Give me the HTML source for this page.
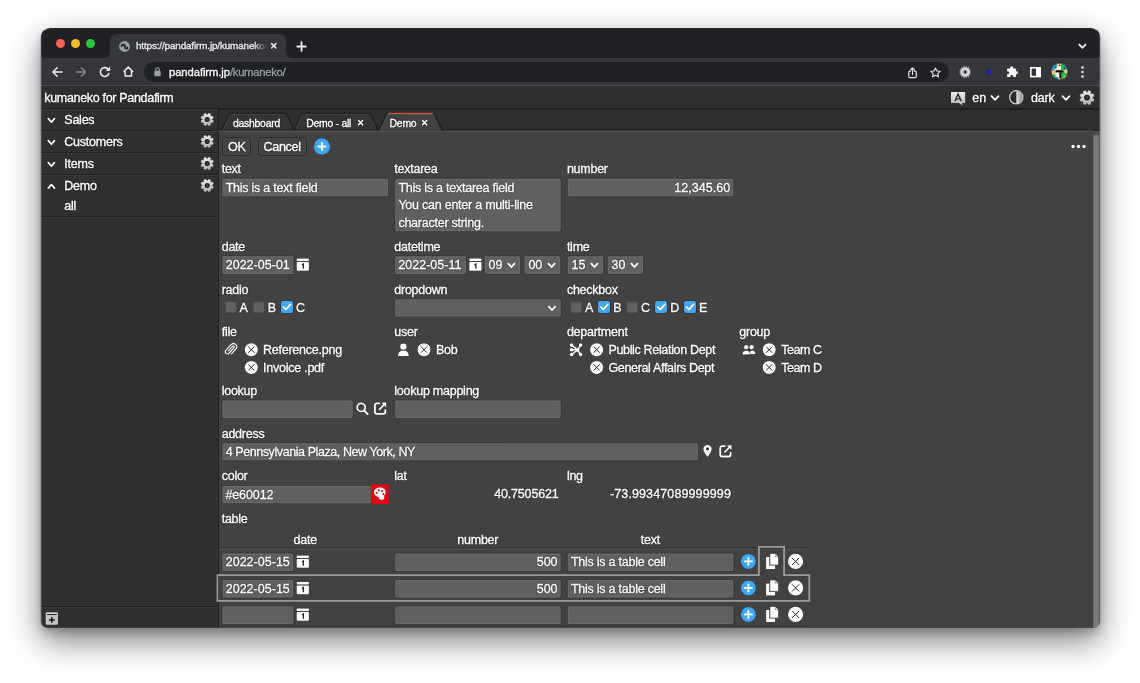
<!DOCTYPE html>
<html lang="en">
<head>
<meta charset="utf-8">
<title>kumaneko for Pandafirm</title>
<style>
*{box-sizing:border-box;margin:0;padding:0}
html,body{width:1140px;height:683px;background:#fff;overflow:hidden}
body{position:relative;font-family:"Liberation Sans",Arial,sans-serif;color:#fff;font-size:12.5px;letter-spacing:-0.25px}
.shadow{position:absolute;left:41px;top:28px;width:1059px;height:600px;border-radius:9px 9px 7px 7px;box-shadow:0 0 0 .6px rgba(0,0,0,.3),0 13px 32px rgba(0,0,0,.5),0 4px 9px rgba(0,0,0,.2)}
.win{position:absolute;left:41px;top:28px;width:1059px;height:600px;border-radius:9px 9px 7px 7px;overflow:hidden;background:#424242}
.rim{position:absolute;left:41px;top:28px;width:1059px;height:600px;border-radius:9px 9px 7px 7px;box-shadow:inset 0 0 0 1px rgba(255,255,255,.2),inset 0 1px 0 0 rgba(255,255,255,.5);pointer-events:none}
.in{position:absolute;left:-41px;top:-28px;width:1140px;height:683px;will-change:transform}
.a{position:absolute}
.t{position:absolute;white-space:pre;line-height:16px;height:16px;text-shadow:0 0 1.4px rgba(0,0,0,.85),0 0 1px rgba(0,0,0,.7);-webkit-text-stroke:.33px currentColor}
svg{position:absolute;overflow:visible}
svg.sh{filter:drop-shadow(0 0 .7px rgba(0,0,0,.95))}
.strip{left:41px;top:27px;width:1059px;height:31px;background:#202124}
.ctab{left:110px;top:34px;width:176px;height:24px;background:#35363a;border-radius:6px 6px 0 0}
.ear{width:6px;height:6px;top:52px;background:radial-gradient(circle at 0 0,rgba(53,54,58,0) 5.6px,#35363a 6.2px)}
.ear.r{background:radial-gradient(circle at 100% 0,rgba(53,54,58,0) 5.6px,#35363a 6.2px)}
.tool{left:41px;top:58px;width:1059px;height:28px;background:#35363a;border-bottom:1px solid #4a4b4f}
.pill{left:144.4px;top:61.6px;width:804.6px;height:20.4px;border-radius:10.2px;background:#202124}
.hdr{left:41px;top:86px;width:1059px;height:24px;background:#2e2e2e;border-bottom:2px solid #1e1e1e}
.side{left:41px;top:109px;width:177.6px;height:520px;background:#303030;border-right:1.2px solid #1f1f1f}
.tabs{left:218.6px;top:110px;width:882px;height:21px;background:#2f2f2f}
.inp{position:absolute;background:#616161;border:1px solid #545454;border-radius:1.5px;box-shadow:0 0 0 .5px rgba(60,60,60,.5)}
.btn{position:absolute;height:19px;border:1px solid #2a2a2a;border-radius:3.5px;background:#434343;text-align:center;line-height:18.4px;font-size:12.6px;letter-spacing:-.3px;box-shadow:inset 0 0 0 .6px rgba(255,255,255,.05);text-shadow:0 0 1.4px rgba(0,0,0,.85),0 0 1px rgba(0,0,0,.7);-webkit-text-stroke:.33px currentColor}
</style>
</head>
<body>
<svg width="0" height="0" style="left:0;top:0"><defs>
<linearGradient id="gg" x1="0" y1="0" x2="0" y2="1"><stop offset="0" stop-color="#ececec"/><stop offset="1" stop-color="#b4b4b4"/></linearGradient>
<linearGradient id="gh" x1="0" y1="0" x2="1" y2="0"><stop offset="0" stop-color="#e6e6e6"/><stop offset="1" stop-color="#8e8e8e"/></linearGradient>
</defs></svg>
<div class="shadow"></div>
<div class="win"><div class="in">
<div class="a strip"></div>
<div class="a ctab"></div>
<div class="a ear" style="left:104px"></div>
<div class="a ear r" style="left:286px"></div>
<div class="a tool"></div>
<div class="a pill"></div>
<div class="a hdr"></div>
<div class="a side"></div>
<div class="a tabs"></div>
<div class="a" style="left:56.099999999999994px;top:39.0px;width:9.4px;height:9.4px;border-radius:50%;background:#fe5f57;box-shadow:0 0 0 .5px rgba(0,0,0,.25)"></div>
<div class="a" style="left:70.8px;top:39.0px;width:9.4px;height:9.4px;border-radius:50%;background:#febc2e;box-shadow:0 0 0 .5px rgba(0,0,0,.25)"></div>
<div class="a" style="left:85.5px;top:39.0px;width:9.4px;height:9.4px;border-radius:50%;background:#28c840;box-shadow:0 0 0 .5px rgba(0,0,0,.25)"></div>
<svg style="left:118.6px;top:40.7px;" width="11" height="11" viewBox="0 0 11 11"><circle cx="5.5" cy="5.5" r="5.4" fill="#9aa0a6"/><path d="M2.6 5.2 Q3.2 2.8 5.2 3.9 Q6.4 4.8 6 5.8 Q5.6 7 7 7.6 Q8 7.8 8.4 6.6" fill="none" stroke="#2b2c30" stroke-width="2" stroke-linecap="round"/></svg>
<div class="t" style="left:136px;top:38px;font-size:9.85px;color:#e8eaed;letter-spacing:-0.12px;width:131px;overflow:hidden;-webkit-mask-image:linear-gradient(90deg,#000 118px,transparent 131px);mask-image:linear-gradient(90deg,#000 118px,transparent 131px);-webkit-text-stroke:.38px currentColor;">https://pandafirm.jp/kumaneko/</div>
<svg style="left:271.2px;top:43.2px;" width="5.6" height="5.6" viewBox="0 0 5.6 5.6"><path d="M.6 .6 L5 5 M5 .6 L.6 5" stroke="#e8eaed" stroke-width="1.5" stroke-linecap="round"/></svg>
<svg style="left:297px;top:41.5px;" width="9" height="9" viewBox="0 0 9 9"><path d="M4.5 .3 V8.7 M.3 4.5 H8.7" stroke="#e8eaed" stroke-width="1.9" stroke-linecap="round"/></svg>
<svg style="left:0;top:0" width="1140" height="683"><path d="M1079.30 44.55 L1082.40 47.85 L1085.50 44.55" fill="none" stroke="#e8eaed" stroke-width="1.8" stroke-linecap="round" stroke-linejoin="round"/></svg>
<svg style="left:52px;top:66.7px;" width="10.4" height="10" viewBox="0 0 10.4 10"><path d="M5.2 .7 L.9 5 L5.2 9.3 M1.1 5 H10" fill="none" stroke="#e8eaed" stroke-width="1.5" stroke-linecap="round" stroke-linejoin="round"/></svg>
<svg style="left:75.8px;top:66.7px;" width="10.4" height="10" viewBox="0 0 10.4 10"><path d="M5.2 .7 L9.5 5 L5.2 9.3 M9.3 5 H.4" fill="none" stroke="#85878b" stroke-width="1.4" stroke-linecap="round" stroke-linejoin="round"/></svg>
<svg style="left:99px;top:66.3px;" width="11.5" height="11.5" viewBox="0 0 11.5 11.5"><path d="M9.3 3.4 A4.4 4.4 0 1 0 9.9 7.5" fill="none" stroke="#e8eaed" stroke-width="1.6" stroke-linecap="round"/><path d="M11.2 .5 V5 H6.7 Z" fill="#e8eaed"/></svg>
<svg style="left:122.8px;top:66.3px;" width="10.6" height="11" viewBox="0 0 10.6 11"><path d="M.9 5.5 L5.3 1.1 L9.7 5.5 M2.1 4.9 V10 H8.5 V4.9" fill="none" stroke="#e8eaed" stroke-width="1.5" stroke-linejoin="round" stroke-linecap="round"/></svg>
<svg style="left:153.5px;top:67.2px;" width="7" height="9.4" viewBox="0 0 7 9.4"><rect x=".3" y="3.8" width="6.4" height="5.4" rx=".9" fill="#9aa0a6"/><path d="M1.7 4 V2.6 a1.8 1.8 0 0 1 3.6 0 V4" fill="none" stroke="#9aa0a6" stroke-width="1.1"/></svg>
<div class="t" style="left:169px;top:63.9px;font-size:11.25px;letter-spacing:-.08px;color:#fff">pandafirm.jp<span style="color:#9aa0a6;letter-spacing:-.28px">/kumaneko/</span></div>
<svg style="left:908px;top:66.6px;" width="9" height="11.4" viewBox="0 0 9 11.4"><path d="M2.6 4.2 H1.9 Q.7 4.2 .7 5.4 V9.5 Q.7 10.7 1.9 10.7 H7.1 Q8.3 10.7 8.3 9.5 V5.4 Q8.3 4.2 7.1 4.2 H6.4" fill="none" stroke="#dfe1e5" stroke-width="1.2" stroke-linecap="round"/><path d="M4.5 7.6 V1.2 M2.6 2.8 L4.5 .9 L6.4 2.8" fill="none" stroke="#dfe1e5" stroke-width="1.2" stroke-linecap="round" stroke-linejoin="round"/></svg>
<svg style="left:930.2px;top:66.6px;" width="11" height="10.6" viewBox="0 0 11 10.6"><path d="M5.5 1 L6.9 4 L10.2 4.35 L7.75 6.6 L8.45 9.85 L5.5 8.15 L2.55 9.85 L3.25 6.6 L.8 4.35 L4.1 4 Z" fill="none" stroke="#dfe1e5" stroke-width="1.2" stroke-linejoin="round"/></svg>
<svg style="left:0;top:0" width="1140" height="683"><path d="M969.75 71.30 L970.97 71.40 L970.97 72.60 L969.75 72.70 L969.60 73.34 L970.66 73.96 L970.14 75.04 L968.99 74.60 L968.58 75.12 L969.27 76.14 L968.33 76.88 L967.49 75.99 L966.90 76.28 L967.07 77.49 L965.90 77.76 L965.53 76.59 L964.87 76.59 L964.50 77.76 L963.33 77.49 L963.50 76.28 L962.91 75.99 L962.07 76.88 L961.13 76.14 L961.82 75.12 L961.41 74.60 L960.26 75.04 L959.74 73.96 L960.80 73.34 L960.65 72.70 L959.43 72.60 L959.43 71.40 L960.65 71.30 L960.80 70.66 L959.74 70.04 L960.26 68.96 L961.41 69.40 L961.82 68.88 L961.13 67.86 L962.07 67.12 L962.91 68.01 L963.50 67.72 L963.33 66.51 L964.50 66.24 L964.87 67.41 L965.53 67.41 L965.90 66.24 L967.07 66.51 L966.90 67.72 L967.49 68.01 L968.33 67.12 L969.27 67.86 L968.58 68.88 L968.99 69.40 L970.14 68.96 L970.66 70.04 L969.60 70.66Z" fill="#c9c9c9"/><circle cx="965.2" cy="72" r="3.4" fill="none" stroke="#eee" stroke-width=".8"/><circle cx="965.2" cy="72" r="1.7" fill="#3a3b3f"/></svg>
<svg style="left:986px;top:67.2px;" width="6" height="9.8" viewBox="0 0 6 9.8"><path d="M4 0 L.2 5.4 H2.7 L1.8 9.8 L5.8 4 H3.3 Z" fill="#1414f0"/></svg>
<svg style="left:1006.4px;top:66.4px;" width="11.8" height="11.4" viewBox="0 0 11.8 11.4"><path d="M4.1 1.9 a1.55 1.55 0 0 1 3.1 0 V2.6 H9.2 Q10 2.6 10 3.4 V5.3 H10.5 a1.45 1.45 0 0 1 0 2.9 H10 V10.3 Q10 11.1 9.2 11.1 H7.3 V10.5 a1.5 1.5 0 0 0 -3 0 V11.1 H1.9 Q1.1 11.1 1.1 10.3 V8.2 H1.6 a1.5 1.5 0 0 0 0 -3 H1.1 V3.4 Q1.1 2.6 1.9 2.6 H4.1 Z" fill="#fff"/></svg>
<svg style="left:1030px;top:66.8px;" width="11" height="10.4" viewBox="0 0 11 10.4"><rect x=".8" y=".8" width="9.4" height="8.8" fill="none" stroke="#fff" stroke-width="1.6"/><rect x="6" y=".8" width="4.2" height="8.8" fill="#fff"/></svg>
<svg style="left:1050.6px;top:63.2px;" width="17" height="17" viewBox="0 0 17 17"><defs><clipPath id="av"><circle cx="8.5" cy="8.5" r="8.4"/></clipPath></defs><g clip-path="url(#av)"><rect width="17" height="17" fill="#f3c485"/><path d="M0 0 H5.6 L6.4 3 L3.2 7.2 L0 8 Z" fill="#2ea3da"/><path d="M10.2 .2 H17 V17 H9.8 Z" fill="#1fb750"/><rect x="13.6" y="3" width="3.4" height="3.4" rx="1" fill="#2ea3da"/><rect x="13.2" y="6.8" width="4" height="3.2" rx="1" fill="#f3c485"/><path d="M12.6 13 L15.2 12.6 L15.6 17 H12 Z" fill="#f3c485"/><rect x="1.2" y="11.3" width="5.8" height="3.4" rx="1.2" fill="#1fb750"/><path d="M3.4 14.2 H7 V17 H4.4 Z" fill="#2b78b8"/><ellipse cx="7.8" cy="4.9" rx="2.5" ry="2.3" fill="#fbf8f2"/><circle cx="4.9" cy="4.2" r=".75" fill="#111"/><circle cx="8.8" cy="2.4" r=".75" fill="#111"/><circle cx="13.6" cy="5.3" r=".7" fill="#111"/><path d="M4.9 7.4 Q8 6.6 12.4 8 L12.2 9.6 Q8 9.2 4.9 9.7 Q4 8.5 4.9 7.4Z" fill="#121212"/><ellipse cx="6.5" cy="11.8" rx="2.3" ry="2.5" fill="#fbf8f2"/><path d="M8.2 9.6 H10.2 L10.4 15.6 H8.6 Z" fill="#121212"/></g><circle cx="8.5" cy="8.5" r="8.4" fill="none" stroke="#1d1d28" stroke-width=".7"/></svg>
<svg style="left:1081px;top:66px;" width="3" height="12" viewBox="0 0 3 12"><circle cx="1.5" cy="1.6" r="1.25" fill="#e8eaed"/><circle cx="1.5" cy="6" r="1.25" fill="#e8eaed"/><circle cx="1.5" cy="10.4" r="1.25" fill="#e8eaed"/></svg>
<div class="t" style="left:44.3px;top:90px;font-size:12.5px;letter-spacing:-0.32px;">kumaneko for Pandafirm</div>
<svg style="left:950.5px;top:91.9px;filter:drop-shadow(0 0 .5px rgba(0,0,0,.8));" width="14.2" height="14" viewBox="0 0 14.2 14"><path d="M.6 0 H13.6 Q14.2 0 14.2 .6 V10.4 Q14.2 11 13.6 11 H11.2 L11.6 13.8 L8 11 H.6 Q0 11 0 10.4 V.6 Q0 0 .6 0Z" fill="url(#gg)"/><path d="M3.9 9.3 L7.1 1.9 L10.3 9.3 M5.1 6.9 H9.1" fill="none" stroke="#2b2b2b" stroke-width="1.4"/></svg>
<div class="t" style="left:972.3px;top:90px;font-size:12.5px;letter-spacing:-0.1px;">en</div>
<svg style="left:0;top:0" width="1140" height="683"><path d="M991.50 96.15 L995.00 99.85 L998.50 96.15" fill="none" stroke="#fff" stroke-width="1.7" stroke-linecap="round" stroke-linejoin="round"/></svg>
<svg style="left:1009.2px;top:90.3px;" width="14.6" height="14.6" viewBox="0 0 14.6 14.6"><circle cx="7.3" cy="7.3" r="6.6" fill="#2b2b2b" stroke="#d6d6d6" stroke-width="1.2"/><path d="M7.3 1.2 A6.1 6.1 0 0 1 7.3 13.4 Z" fill="url(#gh)"/></svg>
<div class="t" style="left:1031px;top:90px;font-size:12.5px;letter-spacing:-0.2px;">dark</div>
<svg style="left:0;top:0" width="1140" height="683"><path d="M1062.50 96.15 L1066.00 99.85 L1069.50 96.15" fill="none" stroke="#fff" stroke-width="1.7" stroke-linecap="round" stroke-linejoin="round"/></svg>
<svg style="left:0;top:0;filter:drop-shadow(0 0 .6px rgba(0,0,0,.9))" width="1140" height="683"><path d="M1087.00 92.64 L1088.65 90.49 L1090.86 91.41 L1090.51 94.09 L1093.19 93.74 L1094.11 95.95 L1091.96 97.60 L1094.11 99.25 L1093.19 101.46 L1090.51 101.11 L1090.86 103.79 L1088.65 104.71 L1087.00 102.56 L1085.35 104.71 L1083.14 103.79 L1083.49 101.11 L1080.81 101.46 L1079.89 99.25 L1082.04 97.60 L1079.89 95.95 L1080.81 93.74 L1083.49 94.09 L1083.14 91.41 L1085.35 90.49Z" fill="url(#gg)" stroke="#cdcdcd" stroke-width=".5" stroke-linejoin="round"/><circle cx="1087" cy="97.6" r="2.9" fill="#191919"/><circle cx="1087" cy="97.6" r="1.74" fill="#3d3d3d"/></svg>
<div class="a" style="left:41px;top:109px;width:176.4px;height:22px;background:#303030;border-top:1.4px solid #3b3b3b;border-bottom:1.3px solid #212121"></div>
<svg style="left:0;top:0" width="1140" height="683"><path d="M48.25 118.50 L51.40 122.10 L54.55 118.50" fill="none" stroke="#fff" stroke-width="1.65" stroke-linecap="round" stroke-linejoin="round"/></svg>
<div class="t" style="left:64.3px;top:112px;font-size:12.5px;letter-spacing:-0.24px;">Sales</div>
<svg style="left:0;top:0;filter:drop-shadow(0 0 .6px rgba(0,0,0,.9))" width="1140" height="683"><path d="M207.20 115.05 L208.65 113.17 L210.59 113.97 L210.28 116.32 L212.63 116.01 L213.43 117.95 L211.55 119.40 L213.43 120.85 L212.63 122.79 L210.28 122.48 L210.59 124.83 L208.65 125.63 L207.20 123.75 L205.75 125.63 L203.81 124.83 L204.12 122.48 L201.77 122.79 L200.97 120.85 L202.85 119.40 L200.97 117.95 L201.77 116.01 L204.12 116.32 L203.81 113.97 L205.75 113.17Z" fill="url(#gg)" stroke="#cdcdcd" stroke-width=".5" stroke-linejoin="round"/><circle cx="207.2" cy="119.4" r="2.5" fill="#191919"/><circle cx="207.2" cy="119.4" r="1.50" fill="#3d3d3d"/></svg>
<div class="a" style="left:41px;top:131px;width:176.4px;height:22px;background:#303030;border-top:1.4px solid #3b3b3b;border-bottom:1.3px solid #212121"></div>
<svg style="left:0;top:0" width="1140" height="683"><path d="M48.25 140.50 L51.40 144.10 L54.55 140.50" fill="none" stroke="#fff" stroke-width="1.65" stroke-linecap="round" stroke-linejoin="round"/></svg>
<div class="t" style="left:64.3px;top:134px;font-size:12.5px;letter-spacing:-0.24px;">Customers</div>
<svg style="left:0;top:0;filter:drop-shadow(0 0 .6px rgba(0,0,0,.9))" width="1140" height="683"><path d="M207.20 137.05 L208.65 135.17 L210.59 135.97 L210.28 138.32 L212.63 138.01 L213.43 139.95 L211.55 141.40 L213.43 142.85 L212.63 144.79 L210.28 144.48 L210.59 146.83 L208.65 147.63 L207.20 145.75 L205.75 147.63 L203.81 146.83 L204.12 144.48 L201.77 144.79 L200.97 142.85 L202.85 141.40 L200.97 139.95 L201.77 138.01 L204.12 138.32 L203.81 135.97 L205.75 135.17Z" fill="url(#gg)" stroke="#cdcdcd" stroke-width=".5" stroke-linejoin="round"/><circle cx="207.2" cy="141.4" r="2.5" fill="#191919"/><circle cx="207.2" cy="141.4" r="1.50" fill="#3d3d3d"/></svg>
<div class="a" style="left:41px;top:153px;width:176.4px;height:22px;background:#303030;border-top:1.4px solid #3b3b3b;border-bottom:1.3px solid #212121"></div>
<svg style="left:0;top:0" width="1140" height="683"><path d="M48.25 162.50 L51.40 166.10 L54.55 162.50" fill="none" stroke="#fff" stroke-width="1.65" stroke-linecap="round" stroke-linejoin="round"/></svg>
<div class="t" style="left:64.3px;top:156px;font-size:12.5px;letter-spacing:-0.24px;">Items</div>
<svg style="left:0;top:0;filter:drop-shadow(0 0 .6px rgba(0,0,0,.9))" width="1140" height="683"><path d="M207.20 159.05 L208.65 157.17 L210.59 157.97 L210.28 160.32 L212.63 160.01 L213.43 161.95 L211.55 163.40 L213.43 164.85 L212.63 166.79 L210.28 166.48 L210.59 168.83 L208.65 169.63 L207.20 167.75 L205.75 169.63 L203.81 168.83 L204.12 166.48 L201.77 166.79 L200.97 164.85 L202.85 163.40 L200.97 161.95 L201.77 160.01 L204.12 160.32 L203.81 157.97 L205.75 157.17Z" fill="url(#gg)" stroke="#cdcdcd" stroke-width=".5" stroke-linejoin="round"/><circle cx="207.2" cy="163.4" r="2.5" fill="#191919"/><circle cx="207.2" cy="163.4" r="1.50" fill="#3d3d3d"/></svg>
<div class="a" style="left:41px;top:175px;width:176.4px;height:22px;background:#303030;border-top:1.4px solid #3b3b3b"></div>
<svg style="left:0;top:0" width="1140" height="683"><path d="M48.25 188.10 L51.40 184.50 L54.55 188.10" fill="none" stroke="#fff" stroke-width="1.65" stroke-linecap="round" stroke-linejoin="round"/></svg>
<div class="t" style="left:64.3px;top:178px;font-size:12.5px;letter-spacing:-0.24px;">Demo</div>
<svg style="left:0;top:0;filter:drop-shadow(0 0 .6px rgba(0,0,0,.9))" width="1140" height="683"><path d="M207.20 181.05 L208.65 179.17 L210.59 179.97 L210.28 182.32 L212.63 182.01 L213.43 183.95 L211.55 185.40 L213.43 186.85 L212.63 188.79 L210.28 188.48 L210.59 190.83 L208.65 191.63 L207.20 189.75 L205.75 191.63 L203.81 190.83 L204.12 188.48 L201.77 188.79 L200.97 186.85 L202.85 185.40 L200.97 183.95 L201.77 182.01 L204.12 182.32 L203.81 179.97 L205.75 179.17Z" fill="url(#gg)" stroke="#cdcdcd" stroke-width=".5" stroke-linejoin="round"/><circle cx="207.2" cy="185.4" r="2.5" fill="#191919"/><circle cx="207.2" cy="185.4" r="1.50" fill="#3d3d3d"/></svg>
<div class="t" style="left:64.3px;top:198px;font-size:12.5px;letter-spacing:-0.24px;">all</div>
<div class="a" style="left:41px;top:215.8px;width:176.4px;height:1.3px;background:#212121"></div>
<div class="a" style="left:41px;top:217.1px;width:176.4px;height:1.2px;background:#383838"></div>
<div class="a" style="left:41px;top:606px;width:176.4px;height:1.2px;background:#1f1f1f"></div>
<div class="a" style="left:41px;top:607.2px;width:176.4px;height:1.2px;background:#3a3a3a"></div>
<svg class="sh" style="left:0;top:0" width="1140" height="683"><rect x="45.7" y="612.3" width="12.2" height="12.4" rx="1.2" fill="#d4d4d4"/><rect x="46.9" y="614.1" width="9.8" height="1" fill="#1a1a1a"/><rect x="46.6" y="615.9" width="10.4" height="7.8" fill="#c4c4c4"/><path d="M51.8 617 V622.8 M48.9 619.9 H54.7" stroke="#111" stroke-width="1.5"/></svg>
<!--TABS-->
<svg style="left:0;top:0" width="1140" height="683"><path d="M221.4 130.6 L228.80 114.80 Q230.00 113.2 231.80 113.2 H284.00 Q285.80 113.2 287.00 114.80 L294.4 130.6 Z" fill="#353535"/><path d="M221.4 130.6 L228.80 114.80 Q230.00 113.2 231.80 113.2 H284.00 Q285.80 113.2 287.00 114.80 L294.4 130.6" fill="none" stroke="#1e1e1e" stroke-width="1.3"/><path d="M223.0 130.6 L230.00 115.10 Q230.60 114.30 232.00 114.30 H283.80" fill="none" stroke="rgba(255,255,255,.07)" stroke-width="1"/></svg>
<div class="t" style="left:233px;top:116px;font-size:10.4px;letter-spacing:-0.24px;">dashboard</div>
<svg style="left:0;top:0" width="1140" height="683"><path d="M293.6 130.6 L301.00 114.80 Q302.20 113.2 304.00 113.2 H368.20 Q370.00 113.2 371.20 114.80 L378.6 130.6 Z" fill="#353535"/><path d="M293.6 130.6 L301.00 114.80 Q302.20 113.2 304.00 113.2 H368.20 Q370.00 113.2 371.20 114.80 L378.6 130.6" fill="none" stroke="#1e1e1e" stroke-width="1.3"/><path d="M295.20000000000005 130.6 L302.20 115.10 Q302.80 114.30 304.20 114.30 H368.00" fill="none" stroke="rgba(255,255,255,.07)" stroke-width="1"/></svg>
<div class="t" style="left:306.2px;top:116px;font-size:10.4px;letter-spacing:-0.24px;">Demo - all</div>
<svg style="left:0;top:0" width="1140" height="683"><rect x="218.6" y="129.2" width="882" height="1.5" fill="#242424"/><rect x="218.6" y="130.6" width="875" height="1.1" fill="#565656"/></svg>
<svg style="left:0;top:0" width="1140" height="683"><path d="M378.6 130.6 L386.00 114.80 Q387.20 113.2 389.00 113.2 H432.00 Q433.80 113.2 435.00 114.80 L442.4 130.6 Z" fill="#424242"/><path d="M378.6 130.6 L386.00 114.80 Q387.20 113.2 389.00 113.2 H432.00 Q433.80 113.2 435.00 114.80 L442.4 130.6" fill="none" stroke="#1e1e1e" stroke-width="1.3"/><path d="M380.20000000000005 130.6 L387.20 115.10 Q387.80 114.30 389.20 114.30 H431.80" fill="none" stroke="rgba(255,255,255,.07)" stroke-width="1"/><path d="M388.20 113.30 H432.80" stroke="#c65a32" stroke-width="1.3"/></svg>
<div class="t" style="left:389.6px;top:116px;font-size:10.4px;letter-spacing:-0.24px;">Demo</div>
<svg style="left:358.0px;top:120.4px;" width="5.2" height="5.2" viewBox="0 0 5.2 5.2"><path d="M.5 .5 L4.7 4.7 M4.7 .5 L.5 4.7" stroke="#fff" stroke-width="1.35" stroke-linecap="round"/></svg>
<svg style="left:422.2px;top:120.4px;" width="5.2" height="5.2" viewBox="0 0 5.2 5.2"><path d="M.5 .5 L4.7 4.7 M4.7 .5 L.5 4.7" stroke="#fff" stroke-width="1.35" stroke-linecap="round"/></svg>
<div class="btn" style="left:222.2px;top:136.6px;width:29.3px">OK</div>
<div class="btn" style="left:257.5px;top:136.6px;width:49.2px">Cancel</div>
<svg class="sh" style="left:0;top:0" width="1140" height="683"><circle cx="322" cy="146.5" r="8.2" fill="#3fa7f5"/><path d="M318.4 146.5 H325.6 M322 142.9 V150.1" stroke="#fff" stroke-width="1.8" stroke-linecap="round"/></svg>
<svg class="sh" style="left:0;top:0" width="1140" height="683"><circle cx="1073" cy="146.4" r="1.75" fill="#fff"/><circle cx="1078.5" cy="146.4" r="1.75" fill="#fff"/><circle cx="1084" cy="146.4" r="1.75" fill="#fff"/></svg>
<div class="a" style="left:1093px;top:131px;width:7px;height:498px;background:#4a4a4a"></div>
<svg style="left:0;top:0" width="1140" height="683"><rect x="1093.3" y="135" width="5.6" height="500" rx="2.8" fill="#7a7a7a"/></svg>
<div class="t" style="left:221.7px;top:161px;font-size:12.5px;">text</div>
<div class="t" style="left:394.3px;top:161px;font-size:12.5px;">textarea</div>
<div class="t" style="left:566.9px;top:161px;font-size:12.5px;">number</div>
<svg style="left:0;top:0" width="1140" height="683"><rect x="221.60" y="177.75" width="167.50" height="19.40" rx="1.8" fill="#3a3a3a"/><rect x="222.60" y="178.75" width="165.50" height="17.40" rx="1.1" fill="#6b6b6b"/><rect x="223.60" y="179.75" width="163.50" height="15.40" rx=".5" fill="#606060"/></svg>
<div class="t" style="left:225.7px;top:180px;font-size:12.5px;letter-spacing:-0.24px;">This is a text field</div>
<svg style="left:0;top:0" width="1140" height="683"><rect x="394.20" y="177.75" width="167.50" height="54.40" rx="1.8" fill="#3a3a3a"/><rect x="395.20" y="178.75" width="165.50" height="52.40" rx="1.1" fill="#6b6b6b"/><rect x="396.20" y="179.75" width="163.50" height="50.40" rx=".5" fill="#606060"/></svg>
<div class="t" style="left:398.40000000000003px;top:180px;font-size:12.5px;letter-spacing:-0.24px;">This is a textarea field</div>
<div class="t" style="left:398.40000000000003px;top:197px;font-size:12.5px;letter-spacing:-0.24px;">You can enter a multi-line</div>
<div class="t" style="left:398.40000000000003px;top:215px;font-size:12.5px;letter-spacing:-0.24px;">character string.</div>
<svg style="left:0;top:0" width="1140" height="683"><rect x="566.80" y="177.75" width="167.50" height="19.40" rx="1.8" fill="#3a3a3a"/><rect x="567.80" y="178.75" width="165.50" height="17.40" rx="1.1" fill="#6b6b6b"/><rect x="568.80" y="179.75" width="163.50" height="15.40" rx=".5" fill="#606060"/></svg>
<div class="t" style="left:567.4px;top:180px;font-size:12.5px;letter-spacing:0.05px;width:162.8px;text-align:right;">12,345.60</div>
<div class="t" style="left:221.7px;top:239px;font-size:12.5px;">date</div>
<div class="t" style="left:394.3px;top:239px;font-size:12.5px;">datetime</div>
<div class="t" style="left:566.9px;top:239px;font-size:12.5px;">time</div>
<svg style="left:0;top:0" width="1140" height="683"><rect x="221.60" y="255.35" width="72.70" height="19.60" rx="1.8" fill="#3a3a3a"/><rect x="222.60" y="256.35" width="70.70" height="17.60" rx="1.1" fill="#6b6b6b"/><rect x="223.60" y="257.35" width="68.70" height="15.60" rx=".5" fill="#606060"/></svg>
<div class="t" style="left:225.7px;top:257px;font-size:12.5px;letter-spacing:0.02px;">2022-05-01</div>
<svg class="sh" style="left:0;top:0" width="1140" height="683"><rect x="296.7" y="258.4" width="12.2" height="2.5" rx=".6" fill="#fff"/><rect x="296.7" y="261.9" width="12.2" height="8.8" rx=".8" fill="#fff"/><path d="M301.9 265.0 L303.3 264.0 V268.79999999999995" fill="none" stroke="#222" stroke-width="1.3"/></svg>
<svg style="left:0;top:0" width="1140" height="683"><rect x="394.20" y="255.35" width="72.70" height="19.60" rx="1.8" fill="#3a3a3a"/><rect x="395.20" y="256.35" width="70.70" height="17.60" rx="1.1" fill="#6b6b6b"/><rect x="396.20" y="257.35" width="68.70" height="15.60" rx=".5" fill="#606060"/></svg>
<div class="t" style="left:398.3px;top:257px;font-size:12.5px;letter-spacing:0.02px;">2022-05-11</div>
<svg class="sh" style="left:0;top:0" width="1140" height="683"><rect x="469.3" y="258.4" width="12.2" height="2.5" rx=".6" fill="#fff"/><rect x="469.3" y="261.9" width="12.2" height="8.8" rx=".8" fill="#fff"/><path d="M474.5 265.0 L475.90000000000003 264.0 V268.79999999999995" fill="none" stroke="#222" stroke-width="1.3"/></svg>
<svg style="left:0;top:0" width="1140" height="683"><rect x="483.80" y="255.35" width="37.30" height="19.40" rx="1.8" fill="#3a3a3a"/><rect x="484.80" y="256.35" width="35.30" height="17.40" rx="1.1" fill="#6b6b6b"/><rect x="485.80" y="257.35" width="33.30" height="15.40" rx=".5" fill="#606060"/></svg>
<div class="t" style="left:488.59999999999997px;top:257px;font-size:12.5px;letter-spacing:0.02px;">09</div>
<svg style="left:0;top:0" width="1140" height="683"><path d="M508.30 263.60 L511.40 267.00 L514.50 263.60" fill="none" stroke="#fff" stroke-width="1.75" stroke-linecap="round" stroke-linejoin="round"/></svg>
<svg style="left:0;top:0" width="1140" height="683"><rect x="523.60" y="255.35" width="37.70" height="19.40" rx="1.8" fill="#3a3a3a"/><rect x="524.60" y="256.35" width="35.70" height="17.40" rx="1.1" fill="#6b6b6b"/><rect x="525.60" y="257.35" width="33.70" height="15.40" rx=".5" fill="#606060"/></svg>
<div class="t" style="left:528.4000000000001px;top:257px;font-size:12.5px;letter-spacing:0.02px;">00</div>
<svg style="left:0;top:0" width="1140" height="683"><path d="M548.50 263.60 L551.60 267.00 L554.70 263.60" fill="none" stroke="#fff" stroke-width="1.75" stroke-linecap="round" stroke-linejoin="round"/></svg>
<svg style="left:0;top:0" width="1140" height="683"><rect x="566.80" y="255.35" width="37.30" height="19.40" rx="1.8" fill="#3a3a3a"/><rect x="567.80" y="256.35" width="35.30" height="17.40" rx="1.1" fill="#6b6b6b"/><rect x="568.80" y="257.35" width="33.30" height="15.40" rx=".5" fill="#606060"/></svg>
<div class="t" style="left:571.6px;top:257px;font-size:12.5px;letter-spacing:0.02px;">15</div>
<svg style="left:0;top:0" width="1140" height="683"><path d="M591.30 263.60 L594.40 267.00 L597.50 263.60" fill="none" stroke="#fff" stroke-width="1.75" stroke-linecap="round" stroke-linejoin="round"/></svg>
<svg style="left:0;top:0" width="1140" height="683"><rect x="606.80" y="255.35" width="37.30" height="19.40" rx="1.8" fill="#3a3a3a"/><rect x="607.80" y="256.35" width="35.30" height="17.40" rx="1.1" fill="#6b6b6b"/><rect x="608.80" y="257.35" width="33.30" height="15.40" rx=".5" fill="#606060"/></svg>
<div class="t" style="left:611.6px;top:257px;font-size:12.5px;letter-spacing:0.02px;">30</div>
<svg style="left:0;top:0" width="1140" height="683"><path d="M631.30 263.60 L634.40 267.00 L637.50 263.60" fill="none" stroke="#fff" stroke-width="1.75" stroke-linecap="round" stroke-linejoin="round"/></svg>
<div class="t" style="left:221.7px;top:282px;font-size:12.5px;">radio</div>
<div class="t" style="left:394.3px;top:282px;font-size:12.5px;">dropdown</div>
<div class="t" style="left:566.9px;top:282px;font-size:12.5px;">checkbox</div>
<svg style="left:0;top:0" width="1140" height="683"><rect x="225.1" y="301.40000000000003" width="11.6" height="11.6" rx="1.6" fill="#4c4c4c"/><rect x="225.9" y="302.2" width="10" height="10" rx="1" fill="#616161"/></svg>
<div class="t" style="left:239.6px;top:300px;font-size:12.5px;">A</div>
<svg style="left:0;top:0" width="1140" height="683"><rect x="253.1" y="301.40000000000003" width="11.6" height="11.6" rx="1.6" fill="#4c4c4c"/><rect x="253.9" y="302.2" width="10" height="10" rx="1" fill="#616161"/></svg>
<div class="t" style="left:267.8px;top:300px;font-size:12.5px;">B</div>
<div class="a" style="left:280.9px;top:300.8px;width:12px;height:12px;background:#42a5f5;border-radius:2px;box-shadow:0 0 0 .5px rgba(0,0,0,.35)"></div>
<svg style="left:0;top:0" width="1140" height="683"><path d="M283.5 307.0 L285.9 309.5 L290.5 304.40000000000003" fill="none" stroke="#fff" stroke-width="1.7" stroke-linecap="round" stroke-linejoin="round"/></svg>
<div class="t" style="left:296px;top:300px;font-size:12.5px;">C</div>
<svg style="left:0;top:0" width="1140" height="683"><rect x="394.20" y="298.35" width="167.50" height="19.20" rx="1.8" fill="#3a3a3a"/><rect x="395.20" y="299.35" width="165.50" height="17.20" rx="1.1" fill="#6b6b6b"/><rect x="396.20" y="300.35" width="163.50" height="15.20" rx=".5" fill="#606060"/></svg>
<svg style="left:0;top:0" width="1140" height="683"><path d="M548.90 306.60 L552.00 310.00 L555.10 306.60" fill="none" stroke="#fff" stroke-width="1.75" stroke-linecap="round" stroke-linejoin="round"/></svg>
<svg style="left:0;top:0" width="1140" height="683"><rect x="570.5" y="301.40000000000003" width="11.6" height="11.6" rx="1.6" fill="#4c4c4c"/><rect x="571.3" y="302.2" width="10" height="10" rx="1" fill="#616161"/></svg>
<div class="t" style="left:585px;top:300px;font-size:12.5px;">A</div>
<div class="a" style="left:598.3px;top:300.8px;width:12px;height:12px;background:#42a5f5;border-radius:2px;box-shadow:0 0 0 .5px rgba(0,0,0,.35)"></div>
<svg style="left:0;top:0" width="1140" height="683"><path d="M600.9 307.0 L603.3 309.5 L607.9 304.40000000000003" fill="none" stroke="#fff" stroke-width="1.7" stroke-linecap="round" stroke-linejoin="round"/></svg>
<div class="t" style="left:613.2px;top:300px;font-size:12.5px;">B</div>
<svg style="left:0;top:0" width="1140" height="683"><rect x="626.5" y="301.40000000000003" width="11.6" height="11.6" rx="1.6" fill="#4c4c4c"/><rect x="627.3" y="302.2" width="10" height="10" rx="1" fill="#616161"/></svg>
<div class="t" style="left:641px;top:300px;font-size:12.5px;">C</div>
<div class="a" style="left:655.3px;top:300.8px;width:12px;height:12px;background:#42a5f5;border-radius:2px;box-shadow:0 0 0 .5px rgba(0,0,0,.35)"></div>
<svg style="left:0;top:0" width="1140" height="683"><path d="M657.9 307.0 L660.3 309.5 L664.9 304.40000000000003" fill="none" stroke="#fff" stroke-width="1.7" stroke-linecap="round" stroke-linejoin="round"/></svg>
<div class="t" style="left:670.2px;top:300px;font-size:12.5px;">D</div>
<div class="a" style="left:683.9px;top:300.8px;width:12px;height:12px;background:#42a5f5;border-radius:2px;box-shadow:0 0 0 .5px rgba(0,0,0,.35)"></div>
<svg style="left:0;top:0" width="1140" height="683"><path d="M686.5 307.0 L688.9 309.5 L693.5 304.40000000000003" fill="none" stroke="#fff" stroke-width="1.7" stroke-linecap="round" stroke-linejoin="round"/></svg>
<div class="t" style="left:699px;top:300px;font-size:12.5px;">E</div>
<div class="t" style="left:221.7px;top:324px;font-size:12.5px;">file</div>
<div class="t" style="left:394.3px;top:324px;font-size:12.5px;">user</div>
<div class="t" style="left:566.9px;top:324px;font-size:12.5px;">department</div>
<div class="t" style="left:739.3px;top:324px;font-size:12.5px;">group</div>
<svg class="sh" style="left:0;top:0" width="1140" height="683"><g transform="translate(231 349.5) rotate(42) scale(.93)"><path d="M-1.1 2.6 V-3.6 a1.1 1.1 0 0 1 2.2 0 V4.4 a2.3 2.3 0 0 1 -4.6 0 V-3.9 a3.5 3.5 0 0 1 7 0 V3.2" fill="none" stroke="#fff" stroke-width="1.3" stroke-linecap="round"/></g></svg>
<svg class="sh" style="left:0;top:0" width="1140" height="683"><circle cx="251.3" cy="349.7" r="6.5" fill="#fff"/><path d="M248.50500000000002 346.905 L254.095 352.495 M254.095 346.905 L248.50500000000002 352.495" stroke="#1c1c1c" stroke-width=".95" stroke-linecap="round"/></svg>
<div class="t" style="left:263px;top:342px;font-size:12.5px;letter-spacing:-0.24px;">Reference.png</div>
<svg class="sh" style="left:0;top:0" width="1140" height="683"><circle cx="251.3" cy="367.4" r="6.5" fill="#fff"/><path d="M248.50500000000002 364.60499999999996 L254.095 370.195 M254.095 364.60499999999996 L248.50500000000002 370.195" stroke="#1c1c1c" stroke-width=".95" stroke-linecap="round"/></svg>
<div class="t" style="left:263px;top:360px;font-size:12.5px;letter-spacing:-0.24px;">Invoice .pdf</div>
<svg class="sh" style="left:0;top:0" width="1140" height="683"><circle cx="403.4" cy="346.6" r="3.2" fill="#fff"/><path d="M398 356 q0 -5.6 5.4 -5.6 q5.4 0 5.4 5.6 z" fill="#fff"/></svg>
<svg class="sh" style="left:0;top:0" width="1140" height="683"><circle cx="424" cy="349.7" r="6.5" fill="#fff"/><path d="M421.205 346.905 L426.795 352.495 M426.795 346.905 L421.205 352.495" stroke="#1c1c1c" stroke-width=".95" stroke-linecap="round"/></svg>
<div class="t" style="left:436px;top:342px;font-size:12.5px;letter-spacing:-0.24px;">Bob</div>
<svg class="sh" style="left:0;top:0" width="1140" height="683"><path d="M577.6 349.8 L571.6 345.1" stroke="#fff" stroke-width="1.5"/><path d="M577.6 349.8 L580.6 345.1" stroke="#fff" stroke-width="1.5"/><path d="M577.6 349.8 L571.6 349.8" stroke="#fff" stroke-width="1.5"/><path d="M577.6 349.8 L571.6 354.5" stroke="#fff" stroke-width="1.5"/><path d="M577.6 349.8 L580.6 354.5" stroke="#fff" stroke-width="1.5"/><circle cx="571.6" cy="345.1" r="1.8" fill="#fff"/><circle cx="580.6" cy="345.1" r="1.8" fill="#fff"/><circle cx="571.6" cy="349.8" r="1.8" fill="#fff"/><circle cx="571.6" cy="354.5" r="1.8" fill="#fff"/><circle cx="580.6" cy="354.5" r="1.8" fill="#fff"/><circle cx="577.6" cy="349.8" r="1.9" fill="#fff"/></svg>
<svg class="sh" style="left:0;top:0" width="1140" height="683"><circle cx="596.6" cy="349.7" r="6.5" fill="#fff"/><path d="M593.8050000000001 346.905 L599.395 352.495 M599.395 346.905 L593.8050000000001 352.495" stroke="#1c1c1c" stroke-width=".95" stroke-linecap="round"/></svg>
<div class="t" style="left:608.4px;top:342px;font-size:12.5px;letter-spacing:-0.33px;">Public Relation Dept</div>
<svg class="sh" style="left:0;top:0" width="1140" height="683"><circle cx="596.6" cy="367.4" r="6.5" fill="#fff"/><path d="M593.8050000000001 364.60499999999996 L599.395 370.195 M599.395 364.60499999999996 L593.8050000000001 370.195" stroke="#1c1c1c" stroke-width=".95" stroke-linecap="round"/></svg>
<div class="t" style="left:608.4px;top:360px;font-size:12.5px;letter-spacing:-0.33px;">General Affairs Dept</div>
<svg class="sh" style="left:0;top:0" width="1140" height="683"><circle cx="751.6" cy="347.2" r="2.1" fill="#fff"/><path d="M749.6 354 q.2 -3.6 2.6 -3.6 q3 0 3.2 3.6 z" fill="#fff"/><circle cx="746.2" cy="347.2" r="2.4" fill="#fff" stroke="#424242" stroke-width=".5"/><path d="M742.2 354.8 q0 -4.4 4 -4.4 q4 0 4 4.4 z" fill="#fff" stroke="#424242" stroke-width=".5"/></svg>
<svg class="sh" style="left:0;top:0" width="1140" height="683"><circle cx="769.2" cy="349.7" r="6.5" fill="#fff"/><path d="M766.4050000000001 346.905 L771.995 352.495 M771.995 346.905 L766.4050000000001 352.495" stroke="#1c1c1c" stroke-width=".95" stroke-linecap="round"/></svg>
<div class="t" style="left:781.2px;top:342px;font-size:12.5px;letter-spacing:-0.45px;">Team C</div>
<svg class="sh" style="left:0;top:0" width="1140" height="683"><circle cx="769.2" cy="367.4" r="6.5" fill="#fff"/><path d="M766.4050000000001 364.60499999999996 L771.995 370.195 M771.995 364.60499999999996 L766.4050000000001 370.195" stroke="#1c1c1c" stroke-width=".95" stroke-linecap="round"/></svg>
<div class="t" style="left:781.2px;top:360px;font-size:12.5px;letter-spacing:-0.45px;">Team D</div>
<div class="t" style="left:221.7px;top:383px;font-size:12.5px;">lookup</div>
<div class="t" style="left:394.3px;top:383px;font-size:12.5px;">lookup mapping</div>
<svg style="left:0;top:0" width="1140" height="683"><rect x="221.60" y="399.55" width="132.10" height="19.40" rx="1.8" fill="#3a3a3a"/><rect x="222.60" y="400.55" width="130.10" height="17.40" rx="1.1" fill="#6b6b6b"/><rect x="223.60" y="401.55" width="128.10" height="15.40" rx=".5" fill="#606060"/></svg>
<svg class="sh" style="left:0;top:0" width="1140" height="683"><circle cx="361.2" cy="407.4" r="4" fill="none" stroke="#fff" stroke-width="1.8"/><path d="M364.2 410.6 L367.6 414" stroke="#fff" stroke-width="1.9" stroke-linecap="round"/></svg>
<svg class="sh" style="left:0;top:0" width="1140" height="683"><path d="M380.10 403.40 H376.90 Q374.90 403.40 374.90 405.40 V411.80 Q374.90 413.80 376.90 413.80 H383.30 Q385.30 413.80 385.30 411.80 V409.21" fill="none" stroke="#fff" stroke-width="1.8" stroke-linecap="butt"/><path d="M379.12 409.82 L385.00 403.70" stroke="#fff" stroke-width="1.7"/><path d="M381.56 402.60 H386.20 V407.38 Z" fill="#fff"/></svg>
<svg style="left:0;top:0" width="1140" height="683"><rect x="394.20" y="399.55" width="167.50" height="19.40" rx="1.8" fill="#3a3a3a"/><rect x="395.20" y="400.55" width="165.50" height="17.40" rx="1.1" fill="#6b6b6b"/><rect x="396.20" y="401.55" width="163.50" height="15.40" rx=".5" fill="#606060"/></svg>
<div class="t" style="left:221.7px;top:426px;font-size:12.5px;">address</div>
<svg style="left:0;top:0" width="1140" height="683"><rect x="221.60" y="442.35" width="477.30" height="19.00" rx="1.8" fill="#3a3a3a"/><rect x="222.60" y="443.35" width="475.30" height="17.00" rx="1.1" fill="#6b6b6b"/><rect x="223.60" y="444.35" width="473.30" height="15.00" rx=".5" fill="#606060"/></svg>
<div class="t" style="left:225.7px;top:444px;font-size:12.5px;letter-spacing:-0.42px;">4 Pennsylvania Plaza, New York, NY</div>
<svg class="sh" style="left:0;top:0" width="1140" height="683"><path d="M707.5 457 Q703.3 451.6 703.3 449.1 a4.2 4.2 0 0 1 8.4 0 Q711.7 451.6 707.5 457Z" fill="#fff"/><circle cx="707.5" cy="448.9" r="1.45" fill="#222"/></svg>
<svg class="sh" style="left:0;top:0" width="1140" height="683"><path d="M725.40 446.10 H722.20 Q720.20 446.10 720.20 448.10 V454.50 Q720.20 456.50 722.20 456.50 H728.60 Q730.60 456.50 730.60 454.50 V451.91" fill="none" stroke="#fff" stroke-width="1.8" stroke-linecap="butt"/><path d="M724.42 452.52 L730.30 446.40" stroke="#fff" stroke-width="1.7"/><path d="M726.86 445.30 H731.50 V450.08 Z" fill="#fff"/></svg>
<div class="t" style="left:221.7px;top:468px;font-size:12.5px;">color</div>
<div class="t" style="left:394.3px;top:468px;font-size:12.5px;">lat</div>
<div class="t" style="left:566.9px;top:468px;font-size:12.5px;">lng</div>
<svg style="left:0;top:0" width="1140" height="683"><rect x="221.60" y="484.95" width="150.10" height="19.20" rx="1.8" fill="#3a3a3a"/><rect x="222.60" y="485.95" width="148.10" height="17.20" rx="1.1" fill="#6b6b6b"/><rect x="223.60" y="486.95" width="146.10" height="15.20" rx=".5" fill="#606060"/></svg>
<div class="t" style="left:225.39999999999998px;top:487px;font-size:12.5px;letter-spacing:-0.1px;">#e60012</div>
<svg style="left:0;top:0" width="1140" height="683"><rect x="370.9" y="484.5" width="17.8" height="19.5" fill="#e60012"/></svg>
<svg style="left:0;top:0" width="1140" height="683"><ellipse cx="379.8" cy="492.3" rx="5.8" ry="4.9" fill="#fff"/><circle cx="381.6" cy="497.2" r="2.7" fill="#fff"/><path d="M376 495.5 L381 499 L379 495 Z" fill="#fff"/><circle cx="376.7" cy="493" r="1" fill="#e60012"/><circle cx="378.9" cy="490.2" r="1" fill="#e60012"/><circle cx="382" cy="490.9" r="1" fill="#e60012"/><circle cx="383.3" cy="494" r="1" fill="#e60012"/></svg>
<div class="t" style="left:394.8px;top:486px;font-size:12.5px;letter-spacing:-0.2px;width:163.6px;text-align:right;">40.7505621</div>
<div class="t" style="left:567.4px;top:486px;font-size:12.5px;letter-spacing:0.12px;width:163.6px;text-align:right;">-73.99347089999999</div>
<div class="t" style="left:221.7px;top:511px;font-size:12.5px;">table</div>
<div class="t" style="left:222.2px;top:532px;font-size:12.5px;width:166px;text-align:center;">date</div>
<div class="t" style="left:394.8px;top:532px;font-size:12.5px;width:166px;text-align:center;">number</div>
<div class="t" style="left:567.4px;top:532px;font-size:12.5px;width:166px;text-align:center;">text</div>
<div class="a" style="left:218.6px;top:547.2px;width:588.4px;height:1.1px;background:#373737"></div>
<div class="a" style="left:218.6px;top:548.6px;width:588.4px;height:1.1px;background:#4c4c4c"></div>
<svg style="left:0;top:0" width="1140" height="683"><rect x="221.60" y="552.55" width="72.70" height="19.40" rx="1.8" fill="#3a3a3a"/><rect x="222.60" y="553.55" width="70.70" height="17.40" rx="1.1" fill="#6b6b6b"/><rect x="223.60" y="554.55" width="68.70" height="15.40" rx=".5" fill="#606060"/></svg>
<div class="t" style="left:225.7px;top:554px;font-size:12.5px;letter-spacing:0.02px;">2022-05-15</div>
<svg class="sh" style="left:0;top:0" width="1140" height="683"><rect x="296.7" y="555.4" width="12.2" height="2.5" rx=".6" fill="#fff"/><rect x="296.7" y="558.9" width="12.2" height="8.8" rx=".8" fill="#fff"/><path d="M301.9 562.0 L303.3 561.0 V565.8" fill="none" stroke="#222" stroke-width="1.3"/></svg>
<svg style="left:0;top:0" width="1140" height="683"><rect x="394.20" y="552.55" width="167.50" height="19.40" rx="1.8" fill="#3a3a3a"/><rect x="395.20" y="553.55" width="165.50" height="17.40" rx="1.1" fill="#6b6b6b"/><rect x="396.20" y="554.55" width="163.50" height="15.40" rx=".5" fill="#606060"/></svg>
<div class="t" style="left:394.8px;top:554px;font-size:12.5px;letter-spacing:0.02px;width:162.8px;text-align:right;">500</div>
<svg style="left:0;top:0" width="1140" height="683"><rect x="566.80" y="552.55" width="167.50" height="19.40" rx="1.8" fill="#3a3a3a"/><rect x="567.80" y="553.55" width="165.50" height="17.40" rx="1.1" fill="#6b6b6b"/><rect x="568.80" y="554.55" width="163.50" height="15.40" rx=".5" fill="#606060"/></svg>
<div class="t" style="left:570.9px;top:554px;font-size:12.5px;letter-spacing:-0.24px;">This is a table cell</div>
<svg class="sh" style="left:0;top:0" width="1140" height="683"><circle cx="748.4" cy="561.4" r="7.5" fill="#3fa7f5"/><path d="M744.8 561.4 H752.0 M748.4 557.8 V565.0" stroke="#fff" stroke-width="1.8" stroke-linecap="round"/></svg>
<svg class="sh" style="left:0;top:0" width="1140" height="683"><path d="M766.0999999999999 557.0000000000001 h3.2 v8.6 h5.8 v2.9 q0 .6 -.6 .6 h-7.8 q-.6 0 -.6 -.6 z" fill="#fff"/><path d="M770.1999999999999 554.4000000000001 q0 -.6 .6 -.6 h4.4 l3 3 v7.4 q0 .6 -.6 .6 h-6.8 q-.6 0 -.6 -.6 z" fill="#fff"/><path d="M775.1999999999999 554.2 v2.6 h2.6" fill="none" stroke="#777" stroke-width=".7"/></svg>
<svg class="sh" style="left:0;top:0" width="1140" height="683"><circle cx="795.6" cy="561.4" r="7.6" fill="#fff"/><path d="M792.332 558.132 L798.868 564.668 M798.868 558.132 L792.332 564.668" stroke="#1c1c1c" stroke-width=".95" stroke-linecap="round"/></svg>
<svg style="left:0;top:0" width="1140" height="683"><rect x="221.60" y="579.05" width="72.70" height="19.40" rx="1.8" fill="#3a3a3a"/><rect x="222.60" y="580.05" width="70.70" height="17.40" rx="1.1" fill="#6b6b6b"/><rect x="223.60" y="581.05" width="68.70" height="15.40" rx=".5" fill="#606060"/></svg>
<div class="t" style="left:225.7px;top:581px;font-size:12.5px;letter-spacing:0.02px;">2022-05-15</div>
<svg class="sh" style="left:0;top:0" width="1140" height="683"><rect x="296.7" y="581.9" width="12.2" height="2.5" rx=".6" fill="#fff"/><rect x="296.7" y="585.4" width="12.2" height="8.8" rx=".8" fill="#fff"/><path d="M301.9 588.5 L303.3 587.5 V592.3" fill="none" stroke="#222" stroke-width="1.3"/></svg>
<svg style="left:0;top:0" width="1140" height="683"><rect x="394.20" y="579.05" width="167.50" height="19.40" rx="1.8" fill="#3a3a3a"/><rect x="395.20" y="580.05" width="165.50" height="17.40" rx="1.1" fill="#6b6b6b"/><rect x="396.20" y="581.05" width="163.50" height="15.40" rx=".5" fill="#606060"/></svg>
<div class="t" style="left:394.8px;top:581px;font-size:12.5px;letter-spacing:0.02px;width:162.8px;text-align:right;">500</div>
<svg style="left:0;top:0" width="1140" height="683"><rect x="566.80" y="579.05" width="167.50" height="19.40" rx="1.8" fill="#3a3a3a"/><rect x="567.80" y="580.05" width="165.50" height="17.40" rx="1.1" fill="#6b6b6b"/><rect x="568.80" y="581.05" width="163.50" height="15.40" rx=".5" fill="#606060"/></svg>
<div class="t" style="left:570.9px;top:581px;font-size:12.5px;letter-spacing:-0.24px;">This is a table cell</div>
<svg class="sh" style="left:0;top:0" width="1140" height="683"><circle cx="748.4" cy="587.9" r="7.5" fill="#3fa7f5"/><path d="M744.8 587.9 H752.0 M748.4 584.3 V591.5" stroke="#fff" stroke-width="1.8" stroke-linecap="round"/></svg>
<svg class="sh" style="left:0;top:0" width="1140" height="683"><path d="M766.0999999999999 583.5000000000001 h3.2 v8.6 h5.8 v2.9 q0 .6 -.6 .6 h-7.8 q-.6 0 -.6 -.6 z" fill="#fff"/><path d="M770.1999999999999 580.9000000000001 q0 -.6 .6 -.6 h4.4 l3 3 v7.4 q0 .6 -.6 .6 h-6.8 q-.6 0 -.6 -.6 z" fill="#fff"/><path d="M775.1999999999999 580.7 v2.6 h2.6" fill="none" stroke="#777" stroke-width=".7"/></svg>
<svg class="sh" style="left:0;top:0" width="1140" height="683"><circle cx="795.6" cy="587.9" r="7.6" fill="#fff"/><path d="M792.332 584.632 L798.868 591.168 M798.868 584.632 L792.332 591.168" stroke="#1c1c1c" stroke-width=".95" stroke-linecap="round"/></svg>
<svg style="left:0;top:0" width="1140" height="683"><rect x="221.60" y="605.55" width="72.70" height="19.40" rx="1.8" fill="#3a3a3a"/><rect x="222.60" y="606.55" width="70.70" height="17.40" rx="1.1" fill="#6b6b6b"/><rect x="223.60" y="607.55" width="68.70" height="15.40" rx=".5" fill="#606060"/></svg>
<svg class="sh" style="left:0;top:0" width="1140" height="683"><rect x="296.7" y="608.4" width="12.2" height="2.5" rx=".6" fill="#fff"/><rect x="296.7" y="611.9" width="12.2" height="8.8" rx=".8" fill="#fff"/><path d="M301.9 615.0 L303.3 614.0 V618.8" fill="none" stroke="#222" stroke-width="1.3"/></svg>
<svg style="left:0;top:0" width="1140" height="683"><rect x="394.20" y="605.55" width="167.50" height="19.40" rx="1.8" fill="#3a3a3a"/><rect x="395.20" y="606.55" width="165.50" height="17.40" rx="1.1" fill="#6b6b6b"/><rect x="396.20" y="607.55" width="163.50" height="15.40" rx=".5" fill="#606060"/></svg>
<svg style="left:0;top:0" width="1140" height="683"><rect x="566.80" y="605.55" width="167.50" height="19.40" rx="1.8" fill="#3a3a3a"/><rect x="567.80" y="606.55" width="165.50" height="17.40" rx="1.1" fill="#6b6b6b"/><rect x="568.80" y="607.55" width="163.50" height="15.40" rx=".5" fill="#606060"/></svg>
<svg class="sh" style="left:0;top:0" width="1140" height="683"><circle cx="748.4" cy="614.4" r="7.5" fill="#3fa7f5"/><path d="M744.8 614.4 H752.0 M748.4 610.8 V618.0" stroke="#fff" stroke-width="1.8" stroke-linecap="round"/></svg>
<svg class="sh" style="left:0;top:0" width="1140" height="683"><path d="M766.0999999999999 610.0000000000001 h3.2 v8.6 h5.8 v2.9 q0 .6 -.6 .6 h-7.8 q-.6 0 -.6 -.6 z" fill="#fff"/><path d="M770.1999999999999 607.4000000000001 q0 -.6 .6 -.6 h4.4 l3 3 v7.4 q0 .6 -.6 .6 h-6.8 q-.6 0 -.6 -.6 z" fill="#fff"/><path d="M775.1999999999999 607.2 v2.6 h2.6" fill="none" stroke="#777" stroke-width=".7"/></svg>
<svg class="sh" style="left:0;top:0" width="1140" height="683"><circle cx="795.6" cy="614.4" r="7.6" fill="#fff"/><path d="M792.332 611.132 L798.868 617.668 M798.868 611.132 L792.332 617.668" stroke="#1c1c1c" stroke-width=".95" stroke-linecap="round"/></svg>
<div class="a" style="left:218.6px;top:626.2px;width:588.4px;height:1px;background:#383838"></div>
<div class="a" style="left:41px;top:627px;width:1059px;height:1px;background:rgba(0,0,0,.22)"></div>
<svg style="left:0;top:0" width="1140" height="683"><path d="M758.9 546.9 H784.1 V575.1 H809.3 V600.9 H217.5 V575.1 H758.9 Z" fill="none" stroke="#9a9a9a" stroke-width="1.8" stroke-linejoin="miter"/></svg>
</div></div>
<svg style="left:0;top:0;pointer-events:none" width="1140" height="683"><path d="M50 27.6 H1091 Q1100 27.6 1100 36.6 V621.1 Q1100 628.1 1093 628.1 H48 Q41 628.1 41 621.1 V36.6 Q41 27.6 50 27.6 Z" fill="none" stroke="rgba(255,255,255,.26)" stroke-width="1"/><path d="M44.5 30.5 Q46.5 27.5 50 27.5 H1091 Q1094.500 27.5 1096.500 30.5" fill="none" stroke="rgba(255,255,255,.62)" stroke-width="1"/></svg>
</body>
</html>
